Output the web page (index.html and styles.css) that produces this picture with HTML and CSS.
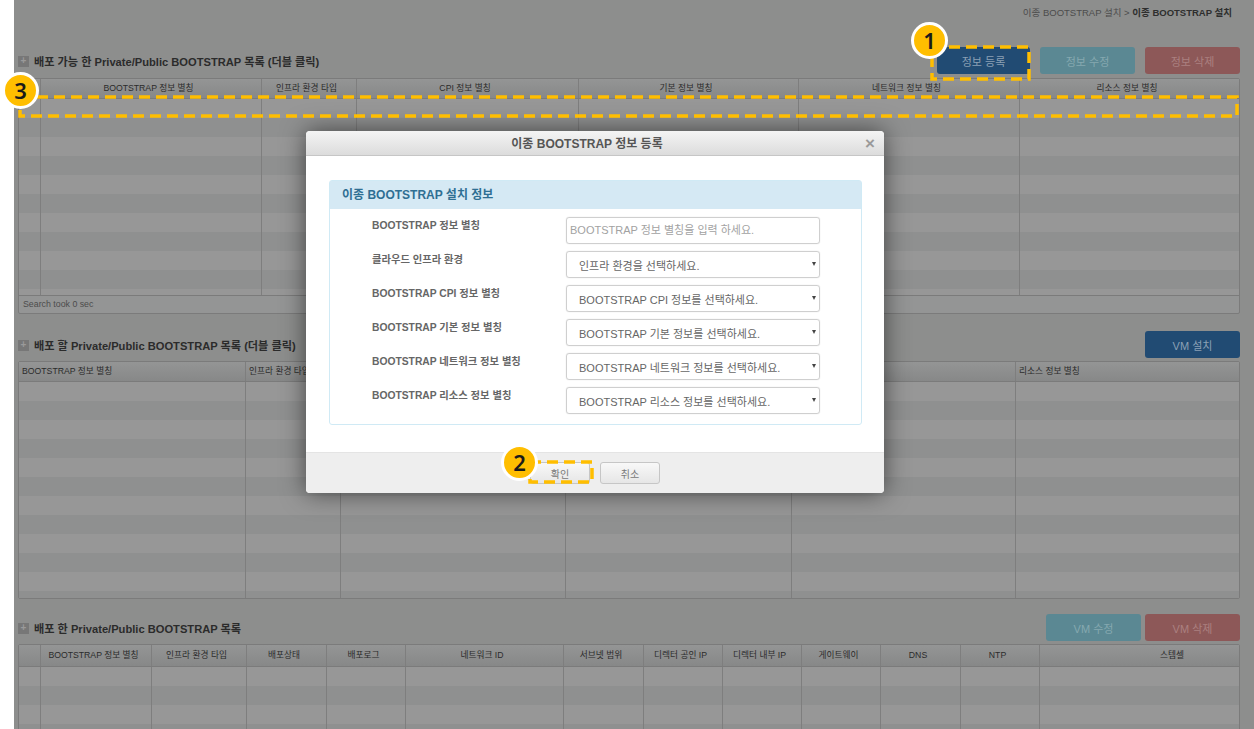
FILE: index.html
```html
<!DOCTYPE html>
<html lang="ko">
<head>
    <meta charset="UTF-8">
    <title>이종 BOOTSTRAP 설치</title>
    <link rel="stylesheet" href="styles.css">
</head>
<body>
    <div class="page">
        <div class="breadcrumb">이종 BOOTSTRAP 설치 &gt; <b>이종 BOOTSTRAP 설치</b></div>

        <section class="section first">
            <div class="section-head">
                <h2><span class="plus">+</span>배포 가능 한 Private/Public BOOTSTRAP 목록 (더블 클릭)</h2>
                <div class="actions">
                    <button class="btn navy narrow">정보 등록</button>
                    <button class="btn teal">정보 수정</button>
                    <button class="btn red">정보 삭제</button>
                </div>
            </div>
            <div class="grid cols-a">
                <div class="grid-head">
                    <div></div>
                    <div>BOOTSTRAP 정보 별칭</div>
                    <div>인프라 환경 타입</div>
                    <div>CPI 정보 별칭</div>
                    <div>기본 정보 별칭</div>
                    <div>네트워크 정보 별칭</div>
                    <div>리소스 정보 별칭</div>
                </div>
                <div class="grid-body short">
                    <div></div><div></div><div></div><div></div><div></div><div></div><div></div>
                </div>
                <div class="grid-foot">Search took 0 sec</div>
            </div>
        </section>

        <section class="section second">
            <div class="section-head">
                <h2><span class="plus">+</span>배포 할 Private/Public BOOTSTRAP 목록 (더블 클릭)</h2>
                <div class="actions">
                    <button class="btn navy">VM 설치</button>
                </div>
            </div>
            <div class="grid cols-b">
                <div class="grid-head left">
                    <div>BOOTSTRAP 정보 별칭</div>
                    <div>인프라 환경 타입</div>
                    <div></div>
                    <div></div>
                    <div></div>
                    <div>리소스 정보 별칭</div>
                </div>
                <div class="grid-body tall">
                    <div></div><div></div><div></div><div></div><div></div><div></div>
                </div>
            </div>
        </section>

        <section class="section third">
            <div class="section-head">
                <h2><span class="plus">+</span>배포 한 Private/Public BOOTSTRAP 목록</h2>
                <div class="actions tight">
                    <button class="btn teal">VM 수정</button>
                    <button class="btn red">VM 삭제</button>
                </div>
            </div>
            <div class="grid cols-c">
                <div class="grid-head high">
                    <div></div>
                    <div>BOOTSTRAP 정보 별칭</div>
                    <div>인프라 환경 타입</div>
                    <div>배포상태</div>
                    <div>배포로그</div>
                    <div>네트워크 ID</div>
                    <div>서브넷 범위</div>
                    <div>디렉터 공인 IP</div>
                    <div>디렉터 내부 IP</div>
                    <div>게이트웨이</div>
                    <div>DNS</div>
                    <div>NTP</div>
                    <div class="stemcell">스템셀</div>
                </div>
                <div class="grid-body open">
                    <div></div><div></div><div></div><div></div><div></div><div></div><div></div>
                    <div></div><div></div><div></div><div></div><div></div><div></div>
                </div>
            </div>
        </section>
    </div>

    <div class="modal">
        <div class="modal-title">이종 BOOTSTRAP 정보 등록<span class="close">×</span></div>
        <div class="modal-body">
            <div class="panel">
                <div class="panel-title">이종 BOOTSTRAP 설치 정보</div>
                <div class="form">
                    <label>BOOTSTRAP 정보 별칭</label>
                    <div class="field placeholder">BOOTSTRAP 정보 별칭을 입력 하세요.</div>
                    <label>클라우드 인프라 환경</label>
                    <div class="field select">인프라 환경을 선택하세요.</div>
                    <label>BOOTSTRAP CPI 정보 별칭</label>
                    <div class="field select">BOOTSTRAP CPI 정보를 선택하세요.</div>
                    <label>BOOTSTRAP 기본 정보 별칭</label>
                    <div class="field select">BOOTSTRAP 기본 정보를 선택하세요.</div>
                    <label>BOOTSTRAP 네트워크 정보 별칭</label>
                    <div class="field select">BOOTSTRAP 네트워크 정보를 선택하세요.</div>
                    <label>BOOTSTRAP 리소스 정보 별칭</label>
                    <div class="field select">BOOTSTRAP 리소스 정보를 선택하세요.</div>
                </div>
            </div>
        </div>
        <div class="modal-foot">
            <button class="btn-plain">확인</button>
            <button class="btn-plain">취소</button>
        </div>
    </div>

    <svg class="mark mark-1" width="101" height="36"><rect x="2" y="2" width="97" height="32" /></svg>
    <svg class="mark mark-2" width="67" height="24"><rect x="2" y="2" width="62" height="20" /></svg>
    <svg class="mark mark-3" width="1222" height="24"><rect x="2" y="2" width="1217" height="19" /></svg>
    <div class="badge badge-1">1</div>
    <div class="badge badge-2">2</div>
    <div class="badge badge-3">3</div>
</body>
</html>
```

FILE: styles.css
```css
html, body {
    margin: 0;
    padding: 0;
    height: 100%;
    background: #ffffff;
    overflow: hidden;
    font-family: "Liberation Sans", "Noto Sans CJK KR", sans-serif;
}

.page {
    margin-left: 14px;
    height: 729px;
    box-sizing: border-box;
    padding: 5px 14px 0 4px;
    background: #8d8e8d;
    overflow: hidden;
}

.breadcrumb {
    height: 15px;
    line-height: 15px;
    padding-right: 8px;
    font-size: 9.5px;
    text-align: right;
    color: #4c4c4c;
}

.breadcrumb b {
    color: #2e2e2e;
}

.section-head {
    display: flex;
    justify-content: space-between;
    align-items: center;
    height: 27px;
    margin-bottom: 3px;
}

.first { margin-top: 27px; }
.first .section-head { margin-bottom: 4px; }
.second { margin-top: 17px; }
.third { margin-top: 15px; }

h2 {
    margin: 0;
    display: flex;
    align-items: center;
    font-size: 11.15px;
    font-weight: bold;
    color: #2b2b2b;
}

.plus {
    width: 11px;
    height: 11px;
    line-height: 10px;
    margin: 2px 5px 0 0;
    background: #777777;
    color: #9a9a9a;
    font-size: 10px;
    text-align: center;
}

.actions {
    display: flex;
    gap: 10px;
}

.actions.tight {
    gap: 4px;
}

.btn {
    width: 95px;
    height: 27px;
    padding: 0;
    border: 0;
    border-radius: 3px;
    font-family: inherit;
    font-size: 11px;
}

.btn.narrow {
    width: 93px;
}

.navy { background: #214b73; color: #8ba0b5; }
.teal { background: #5b8893; color: #86a8b0; }
.red { background: #8d5858; color: #ab8080; }

.grid {
    border: 1px solid #7b7b7b;
    border-radius: 2px;
    background: #949595;
    font-size: 8.7px;
    color: #2b2b2b;
}

.grid-head,
.grid-body {
    display: grid;
}

.cols-a .grid-head,
.cols-a .grid-body {
    grid-template-columns: 22px 221px 95px 222px 220px 221px 1fr;
}

.cols-b .grid-head,
.cols-b .grid-body {
    grid-template-columns: 227px 95px 225px 226px 224px 1fr;
}

.cols-c .grid-head,
.cols-c .grid-body {
    grid-template-columns: 22px 111px 95px 80px 79px 158px 80px 79px 79px 79px 80px 79px 1fr;
}

.grid-head {
    height: 19px;
    line-height: 18px;
    border-bottom: 1px solid #7b7b7b;
    background: linear-gradient(#949595, #878888);
    text-align: center;
}

.grid-head > div {
    padding-right: 5px;
}

.grid-head.left {
    text-align: left;
}

.grid-head.left > div {
    padding: 0 0 0 3px;
}

.grid-head.high {
    height: 21px;
    line-height: 20px;
}

.grid-head > .stemcell {
    padding: 0 0 0 65px;
}

.grid-head > div,
.grid-body > div {
    border-right: 1px solid #7e7e7e;
    white-space: nowrap;
    overflow: hidden;
}

.grid-head > div:last-child,
.grid-body > div:last-child {
    border-right: 0;
}

.grid-body {
    background: repeating-linear-gradient(#979797 0, #979797 19px, #8f9090 19px, #8f9090 38px);
}

.grid-body.short { height: 196px; }
.grid-body.tall { height: 216px; }
.grid-body.open { height: 70px; }

.grid-foot {
    height: 17px;
    line-height: 16px;
    padding-left: 4px;
    border-top: 1px solid #7b7b7b;
    font-size: 8.8px;
    color: #4c4c4c;
}

.modal {
    position: absolute;
    left: 306px;
    top: 131px;
    width: 578px;
    height: 362px;
    display: flex;
    flex-direction: column;
    background: #ffffff;
    border-radius: 4px;
    overflow: hidden;
    box-shadow: 0 0 24px rgba(0, 0, 0, 0.55);
}

.modal-title {
    height: 24px;
    line-height: 27px;
    padding-right: 16px;
    position: relative;
    border-bottom: 1px solid #c6c6c6;
    background: linear-gradient(#f4f4f4, #dcdcdc);
    font-size: 12px;
    font-weight: bold;
    text-align: center;
    color: #555555;
}

.close {
    position: absolute;
    right: 9px;
    top: -1px;
    font-size: 17px;
    color: #9a9a9a;
}

.modal-body {
    flex: 1;
    padding: 24px 22px 0 23px;
}

.panel {
    height: 245px;
    box-sizing: border-box;
    border: 1px solid #d0eaf5;
    border-radius: 3px;
}

.panel-title {
    height: 28px;
    line-height: 28px;
    padding-left: 12px;
    background: #d5e9f4;
    font-size: 12px;
    font-weight: bold;
    color: #2f6f93;
}

.form {
    display: grid;
    grid-template-columns: 194px 254px;
    grid-auto-rows: 27px;
    row-gap: 7px;
    padding: 8px 0 0 42px;
    font-size: 10.3px;
}

.form label {
    font-weight: bold;
    line-height: 18px;
    color: #666666;
}

.field {
    position: relative;
    box-sizing: border-box;
    border: 1px solid #cfcfcf;
    border-radius: 3px;
    line-height: 28px;
    padding-left: 12px;
    font-size: 11px;
    color: #666666;
    box-shadow: 0 0 1px rgba(0, 0, 0, 0.2);
}

.field.placeholder {
    padding-left: 3px;
    line-height: 25px;
    color: #a2a2a2;
}

.select::after {
    content: "";
    position: absolute;
    right: 3px;
    top: 10px;
    border: 2.5px solid transparent;
    border-top: 4px solid #444444;
}

.modal-foot {
    height: 40px;
    display: flex;
    justify-content: center;
    align-items: center;
    gap: 10px;
    border-top: 1px solid #e4e4e4;
    background: #eeeeee;
}

.btn-plain {
    width: 60px;
    height: 22px;
    padding: 0;
    border: 1px solid #c6c6c6;
    border-radius: 3px;
    background: linear-gradient(#f8f8f8, #e6e6e6);
    font-family: inherit;
    font-size: 10px;
    color: #777777;
}

.mark {
    position: absolute;
}

.mark rect {
    fill: none;
    stroke: #ffbe00;
    stroke-width: 3.5;
    stroke-dasharray: 11 6;
}

.mark-1 { left: 930px; top: 45px; }
.mark-2 { left: 528px; top: 460px; }
.mark-3 { left: 18px; top: 95px; }

.badge {
    position: absolute;
    width: 31px;
    height: 31px;
    border: 3px solid #ffffff;
    border-radius: 50%;
    background: #ffbe00;
    font-family: "Noto Sans", sans-serif;
    font-size: 22px;
    font-weight: 600;
    line-height: 31px;
    text-align: center;
    color: #1a1a1a;
}

.badge-1 { left: 911px; top: 22px; }
.badge-2 { left: 501px; top: 444px; }
.badge-3 { left: 2px; top: 72px; }
```
